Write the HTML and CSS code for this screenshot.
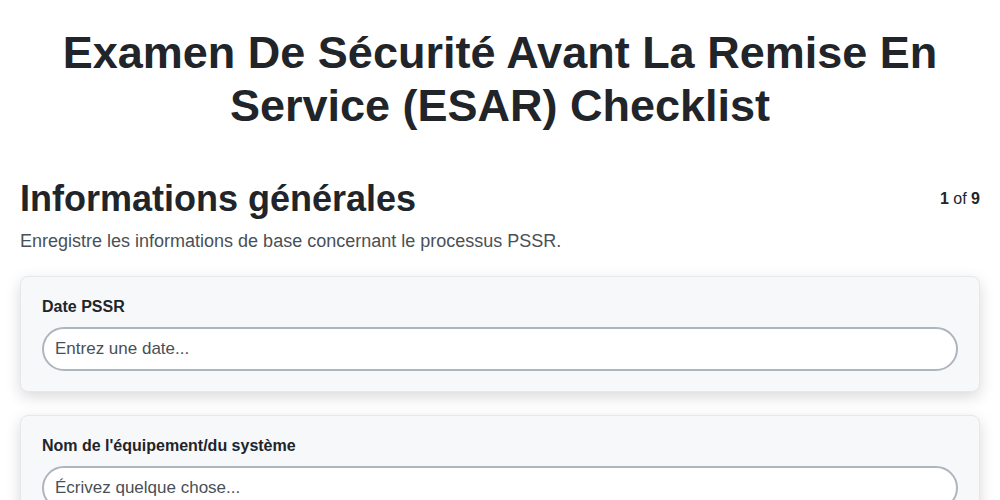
FILE: index.html
```html
<!DOCTYPE html>
<html lang="fr">
<head>
    <meta charset="UTF-8">
    <meta name="viewport" content="width=device-width, initial-scale=1.0">
    <title>ESAR Checklist</title>
    <link rel="stylesheet" href="styles.css">
</head>
<body>

    <div class="page">
        <h1 class="title">Examen De Sécurité Avant La Remise En Service (ESAR) Checklist</h1>

        <div class="section-header">
            <h2>Informations générales</h2>
            <div class="step"><b>1</b> of <b>9</b></div>
        </div>
        <p class="section-desc">Enregistre les informations de base concernant le processus PSSR.</p>

        <div class="field-card">
            <label for="date">Date PSSR</label>
            <input type="text" id="date" placeholder="Entrez une date...">
        </div>

        <div class="field-card">
            <label for="equip">Nom de l'équipement/du système</label>
            <input type="text" id="equip" placeholder="Écrivez quelque chose...">
        </div>
    </div>

</body>
</html>
```

FILE: styles.css
```css
/* Reset */
* {
    margin: 0;
    padding: 0;
    box-sizing: border-box;
}

body {
    font-family: 'Liberation Sans', Arial, sans-serif;
    background-color: #ffffff;
    color: #212529;
}

.page {
    padding: 26px 20px 40px;
}

.title {
    text-align: center;
    font-size: 45px;
    font-weight: bold;
    line-height: 53px;
    margin-bottom: 46px;
}

/* Section */
.section-header {
    display: flex;
    justify-content: space-between;
    align-items: center;
}

.section-header h2 {
    font-size: 36px;
    font-weight: bold;
    line-height: 1.15;
}

.step {
    font-size: 16px;
    color: #212529;
}

.section-desc {
    font-size: 18px;
    color: #495057;
    margin-top: 12px;
    margin-bottom: 24px;
}

/* Cards */
.field-card {
    background-color: #f7f8fa;
    border: 1px solid #e6e8eb;
    border-radius: 8px;
    padding: 21px 21px 20px;
    box-shadow: 0 5px 15px rgba(0, 0, 0, 0.15);
    margin-bottom: 23px;
}

.field-card label {
    display: block;
    font-size: 16px;
    font-weight: bold;
    margin-bottom: 11px;
}

.field-card input {
    width: 100%;
    font-family: inherit;
    font-size: 17px;
    line-height: 20px;
    padding: 10px 11px;
    border: 2px solid #adb5bd;
    border-radius: 22px;
    background-color: #ffffff;
    color: #212529;
    outline: none;
}

.field-card input::placeholder {
    color: #495057;
}
```
